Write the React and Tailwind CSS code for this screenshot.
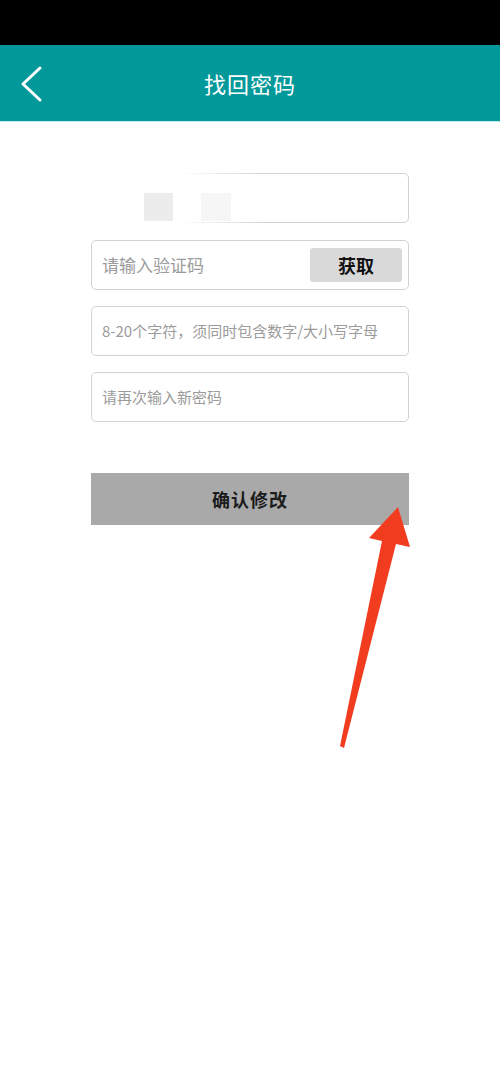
import React from 'react';

const font = { fontFamily: '"Noto Sans CJK SC", "Noto Sans", sans-serif' };

export default function App() {
  return (
    <div className="relative w-[500px] h-[1084px] bg-white overflow-hidden" style={font}>
      {/* status bar */}
      <div className="h-[45px] bg-black" />

      {/* header */}
      <header className="relative h-[77px] bg-[#03999a] flex items-center justify-center border-b border-[#bfe9ea]">
        <button className="absolute left-[18px] top-[20px] w-[26px] h-[38px]">
          <svg viewBox="0 0 26 38" className="w-full h-full" fill="none" stroke="white" strokeWidth="3" strokeLinecap="round" strokeLinejoin="round">
            <path d="M22 3 L5 19 L22 35" />
          </svg>
        </button>
        <h1 className="text-white text-[22px] leading-none tracking-[1px]">找回密码</h1>
      </header>

      {/* form */}
      <div className="flex flex-col w-[318px] ml-[91px] mt-[51px]">
        <div className="relative h-[50px] rounded-[5px] border border-[#d2d2d2]">
          <div className="absolute -left-px -top-px -bottom-px w-[175px] bg-gradient-to-r from-white via-white to-transparent" />
          <div className="absolute left-[52px] top-[19px] w-[29px] h-[28px] bg-[#ececec]" />
          <div className="absolute left-[109px] top-[19px] w-[30px] h-[28px] bg-[#f6f6f6]" />
        </div>

        <div className="mt-[17px] h-[50px] rounded-[5px] border border-[#d2d2d2] flex items-center pl-[10px] pr-[6px]">
          <span className="flex-1 text-[17px] text-[#9b9b9b]">请输入验证码</span>
          <button className="w-[92px] h-[34px] rounded-[3px] bg-[#d9d9d9] text-[18px] font-bold text-[#111]">获取</button>
        </div>

        <div className="mt-[16px] h-[50px] rounded-[5px] border border-[#d2d2d2] flex items-center pl-[10px]">
          <span className="text-[15px] text-[#9b9b9b] whitespace-nowrap">8-20个字符，须同时包含数字/大小写字母</span>
        </div>

        <div className="mt-[16px] h-[50px] rounded-[5px] border border-[#d2d2d2] flex items-center pl-[10px]">
          <span className="text-[15px] text-[#9b9b9b]">请再次输入新密码</span>
        </div>

        <button className="mt-[51px] h-[52px] bg-[#a9a9a9] text-[18px] font-bold text-[#1c1c1c] tracking-[1px]">确认修改</button>
      </div>

      {/* red annotation arrow */}
      <svg className="absolute left-0 top-0 pointer-events-none" width="500" height="1084">
        <polygon
          points="398,507 410,547 396,544 344,748 340,746 382,541 369,538"
          fill="#f23c1f"
        />
      </svg>
    </div>
  );
}
